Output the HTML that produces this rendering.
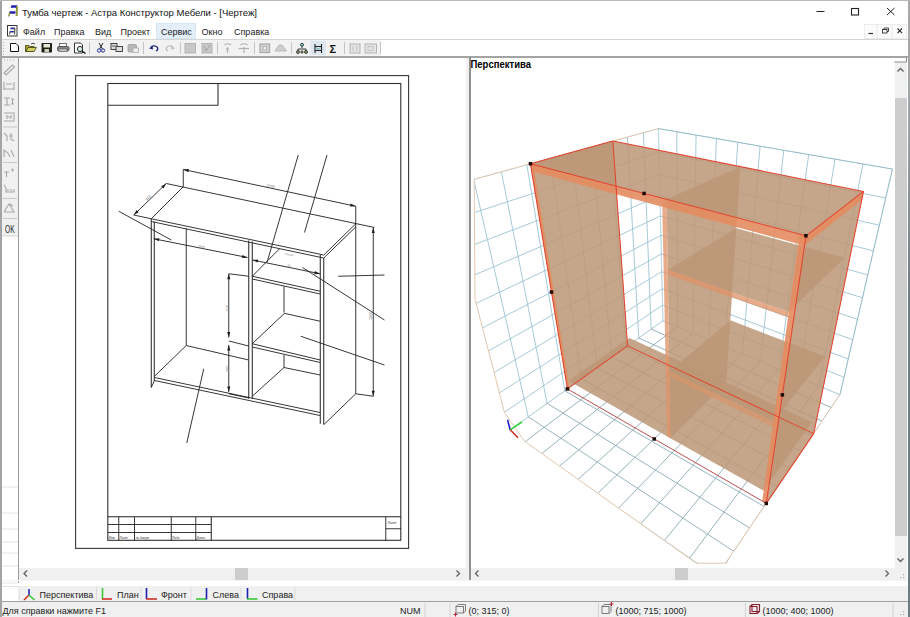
<!DOCTYPE html>
<html><head><meta charset="utf-8">
<style>
*{margin:0;padding:0;box-sizing:border-box}
html,body{width:910px;height:617px;overflow:hidden;background:#fff;font-family:"Liberation Sans",sans-serif;color:#000}
.a{position:absolute;white-space:nowrap}
.t9{font-size:9px;line-height:10px}
</style></head><body>
<div class="a" style="left:0;top:0;width:910px;height:617px;background:#fff"></div>
<!-- window borders -->
<div class="a" style="left:0;top:0;width:2px;height:617px;background:#a4a4a8"></div>
<div class="a" style="left:908px;top:0;width:2px;height:617px;background:linear-gradient(#a8a8a8 0px,#a0a4a6 120px,#6c7c84 300px,#6c7c84 617px)"></div>
<div class="a" style="left:0;top:0;width:910px;height:1px;background:#b8b8b8"></div>
<!-- title -->
<div class="a" style="left:22px;top:7px;font-size:9.5px;line-height:12px;color:#111">Тумба чертеж - Астра Конструктор Мебели - [Чертеж]</div>
<!-- menu -->
<div class="a" style="left:155.5px;top:23px;width:40px;height:16px;background:#e3eef9;border:1px solid #d6e7f6"></div>
<div class="a t9" style="left:23px;top:27px;color:#222">Файл</div>
<div class="a t9" style="left:54px;top:27px;color:#222">Правка</div>
<div class="a t9" style="left:95px;top:27px;color:#222">Вид</div>
<div class="a t9" style="left:120.5px;top:27px;color:#222">Проект</div>
<div class="a t9" style="left:161px;top:27px;color:#222">Сервис</div>
<div class="a t9" style="left:201.5px;top:27px;color:#222">Окно</div>
<div class="a t9" style="left:234px;top:27px;color:#222">Справка</div>
<div class="a" style="left:864px;top:24px;width:43px;height:15px;background:#fbfbfb;border:1px solid #ececec"></div>
<div class="a" style="left:2px;top:39px;width:906px;height:1px;background:#d4d4d4"></div>
<!-- toolbar -->
<div class="a" style="left:2px;top:40px;width:379px;height:16px;background:#f2f2f2"></div>
<div class="a" style="left:2px;top:56px;width:906px;height:1.6px;background:#a4a4a4"></div>
<!-- left column -->
<div class="a" style="left:2px;top:58px;width:16px;height:178px;background:#f0f0f0"></div>
<div class="a" style="left:18px;top:58px;width:1px;height:525px;background:#9c9c9c"></div>
<!-- view gap -->
<div class="a" style="left:466px;top:58px;width:3px;height:523px;background:#f0f0f0"></div>
<div class="a" style="left:469px;top:57px;width:1.5px;height:524px;background:#909090"></div>
<!-- scrollbars -->
<div class="a" style="left:19px;top:567.5px;width:447px;height:12.5px;background:#f0f0f0"></div>
<div class="a" style="left:235px;top:567.5px;width:13px;height:12.5px;background:#cdcdcd"></div>
<div class="a" style="left:470.5px;top:567.5px;width:436px;height:12.5px;background:#f0f0f0"></div>
<div class="a" style="left:674.5px;top:567.5px;width:13.5px;height:12.5px;background:#cdcdcd"></div>
<div class="a" style="left:894.5px;top:62px;width:12px;height:505.5px;background:#f0f0f0"></div>
<div class="a" style="left:894.5px;top:98px;width:12px;height:438px;background:#cdcdcd"></div>
<div class="a" style="left:2px;top:580px;width:906px;height:1px;background:#f4f4f4"></div>
<div class="a" style="left:2px;top:585.5px;width:906px;height:1px;background:#e2e2e2"></div>
<!-- tabs -->
<div class="a" style="left:19px;top:586px;width:889px;height:15px;background:#f0f0f0"></div>
<div class="a" style="left:2px;top:600.5px;width:906px;height:1px;background:#a0a0a0"></div>
<div class="a t9" style="left:39.5px;top:589.5px;color:#222">Перспектива</div>
<div class="a t9" style="left:117px;top:589.5px;color:#222">План</div>
<div class="a t9" style="left:161px;top:589.5px;color:#222">Фронт</div>
<div class="a t9" style="left:212.5px;top:589.5px;color:#222">Слева</div>
<div class="a t9" style="left:262px;top:589.5px;color:#222">Справа</div>
<!-- status -->
<div class="a" style="left:2px;top:601.5px;width:906px;height:15.5px;background:#f0f0f0"></div>
<div class="a t9" style="left:2.5px;top:605.5px;color:#222">Для справки нажмите F1</div>
<div class="a t9" style="left:400px;top:605.5px;color:#222">NUM</div>
<div class="a t9" style="left:468.5px;top:605.5px;color:#222">(0; 315; 0)</div>
<div class="a t9" style="left:615.5px;top:605.5px;color:#222">(1000; 715; 1000)</div>
<div class="a t9" style="left:762.5px;top:605.5px;color:#222">(1000; 400; 1000)</div>
<!-- perspective title -->
<div class="a" style="left:470.5px;top:59px;font-size:9.5px;line-height:11px;font-weight:bold;color:#000;transform:scaleY(1.18);transform-origin:0 100%">Перспектива</div>
<svg class="a" style="left:0;top:0" width="910" height="617" viewBox="0 0 910 617">
<rect x="75.6" y="75.6" width="333" height="472.8" fill="none" stroke="#383838" stroke-width="1.1"/>
<rect x="107.8" y="83.5" width="293" height="456.8" fill="none" stroke="#303030" stroke-width="1.1"/>
<polyline points="108,105.3 218,105.3 218,84" fill="none" stroke="#303030" stroke-width="1.1"/>
<line x1="108" y1="516.75" x2="401" y2="516.75" stroke="#202020" stroke-width="1"/>
<line x1="108" y1="524.5" x2="211.25" y2="524.5" stroke="#202020" stroke-width="0.9"/>
<line x1="108" y1="532.5" x2="211.25" y2="532.5" stroke="#202020" stroke-width="0.9"/>
<line x1="118.75" y1="516.75" x2="118.75" y2="540.5" stroke="#202020" stroke-width="0.9"/>
<line x1="134.5" y1="516.75" x2="134.5" y2="540.5" stroke="#202020" stroke-width="0.9"/>
<line x1="171.25" y1="516.75" x2="171.25" y2="540.5" stroke="#202020" stroke-width="0.9"/>
<line x1="195.75" y1="516.75" x2="195.75" y2="540.5" stroke="#202020" stroke-width="0.9"/>
<line x1="211.25" y1="516.75" x2="211.25" y2="540.5" stroke="#202020" stroke-width="1"/>
<line x1="385.75" y1="516.75" x2="385.75" y2="540.5" stroke="#202020" stroke-width="0.9"/>
<line x1="385.75" y1="528.75" x2="401" y2="528.75" stroke="#202020" stroke-width="0.9"/>
<text x="108.7" y="538.5" font-family="Liberation Sans" font-style="italic" font-size="3.2" fill="#303030">Изм</text>
<text x="119.5" y="538.5" font-family="Liberation Sans" font-style="italic" font-size="3.2" fill="#303030">Лист</text>
<text x="135.5" y="538.5" font-family="Liberation Sans" font-style="italic" font-size="3.2" fill="#303030">№ докум.</text>
<text x="172" y="538.5" font-family="Liberation Sans" font-style="italic" font-size="3.2" fill="#303030">Подп</text>
<text x="196.5" y="538.5" font-family="Liberation Sans" font-style="italic" font-size="3.2" fill="#303030">Дата</text>
<text x="387.5" y="523.6" font-family="Liberation Sans" font-style="italic" font-size="3.4" fill="#303030">Лист</text>
<line x1="166.25" y1="183.5" x2="374.5" y2="227.5" stroke="#202020" stroke-width="0.9"/>
<line x1="183" y1="187" x2="151.25" y2="218.75" stroke="#202020" stroke-width="0.9"/>
<line x1="151.25" y1="218.75" x2="323.75" y2="255" stroke="#202020" stroke-width="0.9"/>
<line x1="151.25" y1="221.5" x2="323.75" y2="258" stroke="#202020" stroke-width="0.9"/>
<line x1="323.75" y1="255" x2="355.75" y2="223.75" stroke="#202020" stroke-width="0.9"/>
<line x1="323.75" y1="258" x2="355.75" y2="227" stroke="#202020" stroke-width="0.9"/>
<line x1="133.75" y1="215" x2="151.25" y2="218.75" stroke="#202020" stroke-width="0.9"/>
<line x1="133.75" y1="215" x2="166.25" y2="183.5" stroke="#202020" stroke-width="0.9"/>
<polygon points="133.8,215.0 136.6,210.1 138.8,212.3" fill="#202020"/>
<polygon points="166.2,183.5 163.4,188.4 161.2,186.2" fill="#202020"/>
<line x1="183.25" y1="169.5" x2="183.25" y2="187" stroke="#202020" stroke-width="0.9"/>
<line x1="183.25" y1="169.5" x2="355.75" y2="206.25" stroke="#202020" stroke-width="0.9"/>
<polygon points="183.2,169.5 189.0,169.1 188.3,172.2" fill="#202020"/>
<polygon points="355.8,206.2 350.0,206.6 350.7,203.6" fill="#202020"/>
<line x1="355.75" y1="206.25" x2="355.75" y2="393.75" stroke="#202020" stroke-width="0.9"/>
<line x1="373.25" y1="227.5" x2="373.25" y2="396.25" stroke="#202020" stroke-width="0.9"/>
<polygon points="373.2,227.5 374.8,233.0 371.7,233.0" fill="#202020"/>
<polygon points="373.2,396.2 371.7,390.8 374.8,390.8" fill="#202020"/>
<line x1="355.75" y1="393.75" x2="373.25" y2="396.25" stroke="#202020" stroke-width="0.9"/>
<line x1="151.25" y1="218.75" x2="151.25" y2="387.5" stroke="#202020" stroke-width="1"/>
<line x1="154.25" y1="221.5" x2="154.25" y2="381" stroke="#202020" stroke-width="1"/>
<line x1="151.25" y1="387.5" x2="154.25" y2="381" stroke="#202020" stroke-width="0.9"/>
<line x1="186.25" y1="228.5" x2="186.25" y2="345.5" stroke="#202020" stroke-width="0.9"/>
<line x1="186.25" y1="345.5" x2="248.75" y2="360" stroke="#202020" stroke-width="0.9"/>
<line x1="186.25" y1="345.5" x2="154.5" y2="376.25" stroke="#202020" stroke-width="0.9"/>
<line x1="154.5" y1="377.5" x2="320" y2="412.5" stroke="#202020" stroke-width="0.9"/>
<line x1="154.5" y1="380.5" x2="320" y2="415.5" stroke="#202020" stroke-width="0.9"/>
<line x1="248.75" y1="240.5" x2="248.75" y2="398.75" stroke="#202020" stroke-width="1"/>
<line x1="252.25" y1="241.5" x2="252.25" y2="398.75" stroke="#202020" stroke-width="1"/>
<line x1="320.25" y1="255" x2="320.25" y2="423.75" stroke="#202020" stroke-width="1"/>
<line x1="323.75" y1="258" x2="323.75" y2="424.5" stroke="#202020" stroke-width="1"/>
<line x1="324" y1="424.5" x2="355.75" y2="393.75" stroke="#202020" stroke-width="0.9"/>
<line x1="252.25" y1="276.25" x2="320.25" y2="291.25" stroke="#202020" stroke-width="0.9"/>
<line x1="252.25" y1="279" x2="320.25" y2="294" stroke="#202020" stroke-width="0.9"/>
<line x1="252.25" y1="276.25" x2="279.5" y2="248.75" stroke="#202020" stroke-width="0.9"/>
<line x1="284" y1="286.25" x2="284" y2="312.5" stroke="#202020" stroke-width="0.9"/>
<line x1="284" y1="313.25" x2="320.25" y2="321.25" stroke="#202020" stroke-width="0.9"/>
<line x1="284" y1="313.75" x2="252.25" y2="343.75" stroke="#202020" stroke-width="0.9"/>
<line x1="252.25" y1="343.75" x2="320.25" y2="360" stroke="#202020" stroke-width="0.9"/>
<line x1="252.25" y1="347" x2="320.25" y2="362.5" stroke="#202020" stroke-width="0.9"/>
<line x1="284" y1="355" x2="284" y2="367.5" stroke="#202020" stroke-width="0.9"/>
<line x1="284" y1="367.5" x2="320.25" y2="375" stroke="#202020" stroke-width="0.9"/>
<line x1="284" y1="367.5" x2="252.25" y2="396.25" stroke="#202020" stroke-width="0.9"/>
<line x1="228.75" y1="273.75" x2="248.75" y2="276.25" stroke="#202020" stroke-width="0.9"/>
<line x1="228.75" y1="341" x2="248.75" y2="346" stroke="#202020" stroke-width="0.9"/>
<line x1="228.75" y1="393.75" x2="248.75" y2="398" stroke="#202020" stroke-width="0.9"/>
<line x1="228.75" y1="273.75" x2="228.75" y2="337.5" stroke="#202020" stroke-width="0.9"/>
<polygon points="228.8,273.8 230.3,279.2 227.2,279.2" fill="#202020"/>
<polygon points="228.8,337.5 227.2,332.0 230.3,332.0" fill="#202020"/>
<line x1="228.75" y1="345" x2="228.75" y2="392" stroke="#202020" stroke-width="0.9"/>
<polygon points="228.8,345.0 230.3,350.5 227.2,350.5" fill="#202020"/>
<polygon points="228.8,392.0 227.2,386.5 230.3,386.5" fill="#202020"/>
<line x1="153.75" y1="238.75" x2="247.5" y2="257.5" stroke="#202020" stroke-width="0.9"/>
<polygon points="153.8,238.8 159.4,238.3 158.8,241.3" fill="#202020"/>
<polygon points="247.5,257.5 241.8,257.9 242.4,254.9" fill="#202020"/>
<line x1="252.5" y1="260" x2="320" y2="273.75" stroke="#202020" stroke-width="0.9"/>
<polygon points="252.5,260.0 258.2,259.6 257.6,262.6" fill="#202020"/>
<polygon points="320.0,273.8 314.3,274.2 314.9,271.1" fill="#202020"/>
<line x1="118.75" y1="211.25" x2="171.25" y2="240" stroke="#202020" stroke-width="0.9"/>
<line x1="298.25" y1="155" x2="267" y2="262.5" stroke="#202020" stroke-width="0.9"/>
<line x1="327" y1="155" x2="304.5" y2="232.5" stroke="#202020" stroke-width="0.9"/>
<line x1="338.25" y1="276.25" x2="384.5" y2="275" stroke="#202020" stroke-width="0.9"/>
<line x1="302.5" y1="267.5" x2="384.5" y2="320" stroke="#202020" stroke-width="0.9"/>
<line x1="300.75" y1="336.25" x2="384.5" y2="365" stroke="#202020" stroke-width="0.9"/>
<line x1="203.75" y1="368.75" x2="186.75" y2="443" stroke="#202020" stroke-width="0.9"/>
<text x="266" y="186.5" font-family="Liberation Sans" font-size="3.8" fill="#858585" transform="rotate(12 266 186.5)">1000</text>
<text x="198" y="247.5" font-family="Liberation Sans" font-size="3.8" fill="#858585" transform="rotate(12 198 247.5)">500</text>
<text x="285" y="255" font-family="Liberation Sans" font-size="3.0" fill="#858585" transform="rotate(9 285 255)">Полка</text>
<text x="287" y="266.5" font-family="Liberation Sans" font-size="3.4" fill="#858585" transform="rotate(12 287 266.5)">2b</text>
<text x="147" y="201" font-family="Liberation Sans" font-size="3.8" fill="#858585" transform="rotate(-45 147 201)">400</text>
<text x="228.5" y="311.5" font-family="Liberation Sans" font-size="3.8" fill="#858585" transform="rotate(-90 228.5 311.5)">100</text>
<text x="228.5" y="372" font-family="Liberation Sans" font-size="3.8" fill="#858585" transform="rotate(-90 228.5 372)">300</text>
<text x="372" y="320" font-family="Liberation Sans" font-size="3.8" fill="#858585" transform="rotate(-90 372 320)">1000</text>
<defs>
<clipPath id="cf"><polygon points="662.9,320.7 840.0,394.7 733.8,551.3 732.7,552.0 726.4,563.2 696.3,563.2 690.0,558.8 524.5,441.2 528.6,416.6"/></clipPath>
<clipPath id="cl"><polygon points="658.4,128.5 662.9,320.7 528.6,416.6 524.5,441.2 504.5,412.5 475.0,299.0 474.2,179.2"/></clipPath>
<clipPath id="cb"><polygon points="658.4,128.5 892.5,169.0 840.0,394.7 662.9,320.7"/></clipPath>
<clipPath id="cview"><rect x="470" y="58" width="424" height="509"/></clipPath>
</defs>
<g clip-path="url(#cview)">
<g clip-path="url(#cf)" stroke="#8aaab4" stroke-width="0.9"><line x1="489.7" y1="444.4" x2="662.9" y2="320.7"/><line x1="505.8" y1="456.3" x2="677.6" y2="326.8"/><line x1="522.7" y1="468.8" x2="692.9" y2="333.2"/><line x1="540.6" y1="482.1" x2="708.8" y2="339.9"/><line x1="559.5" y1="496.1" x2="725.3" y2="346.8"/><line x1="579.5" y1="510.9" x2="742.5" y2="353.9"/><line x1="600.7" y1="526.6" x2="760.4" y2="361.4"/><line x1="623.3" y1="543.3" x2="779.0" y2="369.2"/><line x1="647.4" y1="561.1" x2="798.5" y2="377.4"/><line x1="673.0" y1="580.1" x2="818.8" y2="385.8"/><line x1="700.4" y1="600.5" x2="840.0" y2="394.7"/><line x1="471.1" y1="435.4" x2="727.0" y2="626.9"/><line x1="492.8" y1="420.6" x2="745.2" y2="596.9"/><line x1="513.0" y1="406.9" x2="761.8" y2="569.6"/><line x1="532.0" y1="394.0" x2="776.9" y2="544.7"/><line x1="549.7" y1="382.0" x2="790.7" y2="521.9"/><line x1="566.4" y1="370.6" x2="803.4" y2="501.0"/><line x1="582.2" y1="360.0" x2="815.2" y2="481.6"/><line x1="597.0" y1="349.9" x2="826.0" y2="463.8"/><line x1="611.0" y1="340.4" x2="836.0" y2="447.2"/><line x1="624.3" y1="331.4" x2="845.4" y2="431.8"/><line x1="636.8" y1="322.9" x2="854.1" y2="417.5"/><line x1="648.7" y1="314.8" x2="862.3" y2="404.0"/></g>
<g clip-path="url(#cl)" stroke="#9cc4d2" stroke-width="0.9"><line x1="493.7" y1="470.9" x2="396.3" y2="153.6"/><line x1="514.4" y1="455.1" x2="432.0" y2="146.1"/><line x1="533.7" y1="440.4" x2="464.4" y2="139.3"/><line x1="551.7" y1="426.7" x2="493.8" y2="133.2"/><line x1="568.7" y1="413.7" x2="520.6" y2="127.6"/><line x1="584.7" y1="401.6" x2="545.1" y2="122.5"/><line x1="599.7" y1="390.1" x2="567.6" y2="117.8"/><line x1="613.9" y1="379.3" x2="588.5" y2="113.4"/><line x1="627.3" y1="369.1" x2="607.7" y2="109.4"/><line x1="640.0" y1="359.4" x2="625.6" y2="105.7"/><line x1="652.0" y1="350.3" x2="642.2" y2="102.2"/><line x1="663.4" y1="341.6" x2="657.7" y2="98.9"/><line x1="414.9" y1="195.6" x2="660.6" y2="127.9"/><line x1="424.9" y1="228.9" x2="661.1" y2="151.3"/><line x1="434.2" y1="259.8" x2="661.5" y2="173.5"/><line x1="442.8" y1="288.5" x2="662.0" y2="194.8"/><line x1="450.9" y1="315.3" x2="662.4" y2="215.0"/><line x1="458.4" y1="340.3" x2="662.8" y2="234.4"/><line x1="465.5" y1="363.8" x2="663.2" y2="252.9"/><line x1="472.1" y1="385.8" x2="663.6" y2="270.6"/><line x1="478.3" y1="406.5" x2="664.0" y2="287.6"/><line x1="484.2" y1="426.0" x2="664.3" y2="303.9"/><line x1="489.7" y1="444.4" x2="664.6" y2="319.5"/></g>
<g clip-path="url(#cb)" stroke="#9cc4d2" stroke-width="0.9"><line x1="663.4" y1="341.6" x2="657.7" y2="98.9"/><line x1="677.7" y1="347.9" x2="676.7" y2="101.5"/><line x1="692.6" y1="354.5" x2="696.6" y2="104.2"/><line x1="708.0" y1="361.4" x2="717.6" y2="107.0"/><line x1="724.0" y1="368.5" x2="739.7" y2="110.0"/><line x1="740.6" y1="375.9" x2="762.9" y2="113.2"/><line x1="757.9" y1="383.5" x2="787.5" y2="116.5"/><line x1="775.9" y1="391.6" x2="813.5" y2="120.0"/><line x1="794.7" y1="399.9" x2="841.0" y2="123.7"/><line x1="814.3" y1="408.6" x2="870.2" y2="127.6"/><line x1="834.7" y1="417.7" x2="901.2" y2="131.8"/><line x1="640.8" y1="125.4" x2="923.9" y2="174.4"/><line x1="641.8" y1="148.5" x2="916.0" y2="204.2"/><line x1="642.7" y1="170.4" x2="908.5" y2="232.0"/><line x1="643.6" y1="191.4" x2="901.5" y2="258.2"/><line x1="644.4" y1="211.4" x2="894.9" y2="282.7"/><line x1="645.2" y1="230.5" x2="888.6" y2="305.9"/><line x1="646.0" y1="248.8" x2="882.8" y2="327.7"/><line x1="646.7" y1="266.4" x2="877.2" y2="348.4"/><line x1="647.4" y1="283.2" x2="872.0" y2="367.9"/><line x1="648.1" y1="299.3" x2="867.0" y2="386.4"/><line x1="648.7" y1="314.8" x2="862.3" y2="404.0"/></g>
<polyline points="658.4,128.5 474.2,179.2 475.0,299.0 504.5,412.5 524.5,441.2 690.0,558.8 696.3,563.2 726.4,563.2 732.7,552.0 733.8,551.3 840.0,394.7" fill="none" stroke="#e2c8b0" stroke-width="1"/>
<polyline points="658.4,128.5 892.5,169.0 840.0,394.7" fill="none" stroke="#98bcc8" stroke-width="1"/>
<g><polygon points="567.4,388.9 530.4,163.7 612.8,141.0 627.6,345.9" fill="rgba(188,150,118,0.85)"/><polygon points="766.3,503.4 806.0,235.8 863.5,191.4 813.7,433.6" fill="rgba(188,150,118,0.85)"/><polygon points="530.4,163.7 806.0,235.8 863.5,191.4 612.8,141.0" fill="rgba(188,150,118,0.85)"/><polygon points="568.3,380.7 763.7,490.7 811.9,421.9 629.4,337.9" fill="rgba(188,150,118,0.85)"/><polygon points="670.5,438.2 666.6,199.3 740.4,166.7 726.3,382.5" fill="rgba(188,150,118,0.85)"/><polygon points="667.8,269.7 788.8,312.1 844.7,257.8 736.4,228.2" fill="rgba(188,150,118,0.85)"/><polygon points="669.4,371.6 773.4,421.4 825.0,356.6 730.4,320.3" fill="rgba(188,150,118,0.85)"/><polygon points="567.4,388.9 569.9,390.3 533.5,164.5 530.4,163.7" fill="rgba(228,140,95,0.88)"/><polygon points="762.2,501.1 766.3,503.4 806.0,235.8 799.8,234.1" fill="rgba(228,140,95,0.9)"/><polygon points="531.7,171.2 804.5,245.5 806.0,235.8 530.4,163.7" fill="rgba(228,140,95,0.9)"/><polygon points="804.5,245.5 806.0,235.8 863.5,191.4 861.8,199.7" fill="rgba(228,140,95,0.9)"/><polygon points="667.2,436.3 670.5,438.2 666.6,199.3 662.1,198.2" fill="rgba(224,148,104,0.78)"/><polygon points="667.8,274.4 788.1,317.3 788.8,312.1 667.8,269.7" fill="rgba(224,148,104,0.78)"/><polygon points="669.5,376.6 772.7,426.7 773.4,421.4 669.4,371.6" fill="rgba(214,150,108,0.8)"/></g>
<g stroke="#e2442e" stroke-width="1.05"><line x1="530.4" y1="163.7" x2="806.0" y2="235.8"/><line x1="530.4" y1="163.7" x2="612.8" y2="141.0"/><line x1="612.8" y1="141.0" x2="863.5" y2="191.4"/><line x1="806.0" y1="235.8" x2="863.5" y2="191.4"/><line x1="530.4" y1="163.7" x2="567.4" y2="388.9"/><line x1="806.0" y1="235.8" x2="766.3" y2="503.4"/><line x1="766.3" y1="503.4" x2="813.7" y2="433.6"/><line x1="567.4" y1="388.9" x2="627.6" y2="345.9"/><line x1="627.6" y1="345.9" x2="813.7" y2="433.6"/><line x1="612.8" y1="141.0" x2="627.6" y2="345.9"/><line x1="863.5" y1="191.4" x2="813.7" y2="433.6"/></g>
<g stroke="#b84444" stroke-width="0.95"><line x1="567.4" y1="388.9" x2="766.3" y2="503.4"/></g>
<rect x="528.7" y="162.0" width="3.5" height="3.5" fill="#1e0c0a"/><rect x="642.3" y="191.7" width="3.5" height="3.5" fill="#1e0c0a"/><rect x="804.2" y="234.0" width="3.5" height="3.5" fill="#1e0c0a"/><rect x="549.7" y="290.3" width="3.5" height="3.5" fill="#1e0c0a"/><rect x="780.6" y="393.1" width="3.5" height="3.5" fill="#1e0c0a"/><rect x="565.6" y="387.2" width="3.5" height="3.5" fill="#1e0c0a"/><rect x="652.5" y="437.2" width="3.5" height="3.5" fill="#1e0c0a"/><rect x="764.5" y="501.7" width="3.5" height="3.5" fill="#1e0c0a"/>
<line x1="510.1" y1="429.8" x2="507.6" y2="419.8" stroke="#2020d0" stroke-width="1.6"/>
<line x1="510.1" y1="429.8" x2="522.1" y2="421.8" stroke="#30d030" stroke-width="1.6"/>
<line x1="510.1" y1="429.8" x2="518.1" y2="437.8" stroke="#d03020" stroke-width="1.6"/>
</g>
<path d="M11.5,5.2 H17.5 L16.8,7.8 H10.5 Z" fill="#2020b8"/>
<path d="M9.6,11.2 H15.6 L15.2,13.8 H8.8 Z" fill="#2020b8"/>
<path d="M16,6 L18,6.5 L17.6,16 L15.6,16 Z" fill="#8c9638"/>
<path d="M9.2,12.5 L10.6,12.5 L9.4,16.5 L7.8,16.5 Z" fill="#8c9638"/>
<rect x="7.5" y="25.5" width="9.5" height="10.5" fill="#fff" stroke="#3a3a3a" stroke-width="1"/>
<path d="M10.8,27.6 H15 L14.6,29.2 H10.2 Z" fill="#3030a0"/>
<path d="M9.8,31 H14 L13.7,32.6 H9.3 Z" fill="#3030a0"/>
<path d="M14.2,28 L15.4,28.2 L15.1,34.5 L13.9,34.5 Z" fill="#505a40"/>
<path d="M9.6,32 L10.6,32 L10,34.5 L9,34.5 Z" fill="#505a40"/>
<line x1="816.5" y1="11.5" x2="824.5" y2="11.5" stroke="#222" stroke-width="1"/>
<rect x="851.5" y="8.5" width="7" height="6.5" fill="none" stroke="#222" stroke-width="1.1"/>
<path d="M887,8 L894.5,15 M894.5,8 L887,15" stroke="#222" stroke-width="1"/>
<line x1="877" y1="25" x2="877" y2="38.5" stroke="#e8e8e8"/><line x1="892" y1="25" x2="892" y2="38.5" stroke="#e8e8e8"/>
<line x1="868.5" y1="33.5" x2="873" y2="33.5" stroke="#333" stroke-width="1.2"/>
<g fill="none" stroke="#333" stroke-width="0.9"><rect x="882.5" y="29.5" width="4.5" height="3.5"/><path d="M884,29.5 V28 H888.5 V31.5 H887"/></g>
<path d="M897.5,28.5 L902,33 M902,28.5 L897.5,33" stroke="#333" stroke-width="1.1"/>
<rect x="3" y="42" width="1" height="1" fill="#b0b0b0"/>
<rect x="3" y="45" width="1" height="1" fill="#b0b0b0"/>
<rect x="3" y="48" width="1" height="1" fill="#b0b0b0"/>
<rect x="3" y="51" width="1" height="1" fill="#b0b0b0"/>
<rect x="3" y="54" width="1" height="1" fill="#b0b0b0"/>
<line x1="89.5" y1="42" x2="89.5" y2="54" stroke="#c4c4c4" stroke-width="1"/>
<line x1="143.5" y1="42" x2="143.5" y2="54" stroke="#c4c4c4" stroke-width="1"/>
<line x1="180.5" y1="42" x2="180.5" y2="54" stroke="#c4c4c4" stroke-width="1"/>
<line x1="217.5" y1="42" x2="217.5" y2="54" stroke="#c4c4c4" stroke-width="1"/>
<line x1="254.5" y1="42" x2="254.5" y2="54" stroke="#c4c4c4" stroke-width="1"/>
<line x1="291.5" y1="42" x2="291.5" y2="54" stroke="#c4c4c4" stroke-width="1"/>
<line x1="344.5" y1="42" x2="344.5" y2="54" stroke="#c4c4c4" stroke-width="1"/>
<line x1="380.5" y1="42" x2="380.5" y2="54" stroke="#c4c4c4" stroke-width="1"/>
<path d="M10.5,43.5 H16 L18.5,46 V51.5 H10.5 Z" fill="#fff" stroke="#111" stroke-width="1"/>
<path d="M25.5,45.5 H29 L30,46.5 H34 V51.5 H25.5 Z" fill="#a8a030" stroke="#404010" stroke-width="0.8"/><path d="M26,51.5 L28,47.5 H36.5 L34,51.5 Z" fill="#d8d060" stroke="#404010" stroke-width="0.8"/><path d="M31,44 Q33,42.5 35,44" fill="none" stroke="#333" stroke-width="0.9"/>
<rect x="42" y="43.5" width="9.5" height="8.5" fill="#202010" stroke="#111" stroke-width="0.8"/><rect x="43.5" y="44" width="6.5" height="3.5" fill="#e8e8d8"/><rect x="44.5" y="49" width="4.5" height="3" fill="#d0d0c0"/>
<rect x="59.5" y="43.5" width="7" height="3" fill="#fff" stroke="#555" stroke-width="0.8"/><rect x="57.5" y="46.5" width="11.5" height="4.5" rx="1.5" fill="#888" stroke="#444" stroke-width="0.8"/><rect x="59" y="49" width="8" height="2.5" fill="#ccc" stroke="#555" stroke-width="0.6"/>
<path d="M74.5,43 H80.5 L82.5,45 V53 H74.5 Z" fill="#fff" stroke="#222" stroke-width="0.9"/><circle cx="80" cy="49" r="2.6" fill="#d8f0f0" stroke="#222" stroke-width="1"/><line x1="82" y1="51" x2="85.5" y2="53.5" stroke="#111" stroke-width="1.3"/>
<path d="M99,43 L102.5,49 M103,43 L99.5,49" stroke="#111" stroke-width="0.9"/><circle cx="99" cy="50.5" r="1.7" fill="none" stroke="#2838a0" stroke-width="1"/><circle cx="103" cy="50.5" r="1.7" fill="none" stroke="#2838a0" stroke-width="1"/>
<rect x="111" y="43.5" width="6" height="6" fill="#ddd" stroke="#333" stroke-width="0.9"/><rect x="116" y="46.5" width="6.5" height="5" fill="#ddd" stroke="#333" stroke-width="0.9"/><line x1="112" y1="46" x2="115.5" y2="46" stroke="#333" stroke-width="0.8"/>
<rect x="128" y="44.5" width="8.5" height="7.5" rx="1" fill="#b8b8b8" stroke="#a0a0a0" stroke-width="0.8"/><rect x="133" y="48" width="5.5" height="4.5" fill="#eee" stroke="#a8a8a8" stroke-width="0.8"/>
<path d="M151,47 Q155,44.5 157.5,47.5 Q158.5,50 156,51" fill="none" stroke="#1a2a80" stroke-width="1.3"/><path d="M149,48.5 L152.5,45.5 L153,49.5 Z" fill="#1a2a80"/>
<path d="M173,47 Q169,44.5 166.5,47.5 Q165.5,50 168,51" fill="none" stroke="#c0c0c0" stroke-width="1.3"/><path d="M175,48.5 L171.5,45.5 L171,49.5 Z" fill="#c0c0c0"/>
<rect x="185" y="43.5" width="10.5" height="9.5" fill="#c8c8c8" stroke="#b0b0b0" stroke-width="0.9"/>
<rect x="202" y="43.5" width="10" height="9.5" fill="#c8c8c8" stroke="#b0b0b0" stroke-width="0.9"/><path d="M204,46 L206,51 L210,45" fill="none" stroke="#a0a0a0"/>
<g stroke="#b0b0b0" fill="none" stroke-width="1.2"><path d="M224.5,45 Q228,42.5 231,45"/><line x1="227.5" y1="47" x2="227.5" y2="53"/><line x1="226" y1="49" x2="229" y2="49"/></g>
<g stroke="#b0b0b0" fill="none" stroke-width="1.2"><path d="M240.5,45 Q244,42.5 247.5,45"/><line x1="238.5" y1="48.5" x2="249" y2="48.5"/><line x1="244" y1="47" x2="244" y2="53"/></g>
<rect x="260" y="44" width="9.5" height="8.5" fill="#d4d4d4" stroke="#a8a8a8" stroke-width="1.2"/><rect x="263" y="46.5" width="3.5" height="3.5" fill="#f4f4f4" stroke="#a8a8a8" stroke-width="0.8"/>
<path d="M275,51 L279,45 H282 L286.5,51 Z" fill="#d0d0d0" stroke="#b0b0b0" stroke-width="0.8"/>
<g stroke="#222" stroke-width="0.9" fill="none"><path d="M302,46 V48 M298,51 V49 H306 V51"/></g><circle cx="302" cy="44.8" r="1.5" fill="#7ad0d0" stroke="#222" stroke-width="0.8"/><circle cx="298" cy="52" r="1.5" fill="#90a870" stroke="#222" stroke-width="0.8"/><circle cx="306" cy="52" r="1.5" fill="#90a870" stroke="#222" stroke-width="0.8"/><circle cx="302" cy="52" r="1.2" fill="#90a870" stroke="#222" stroke-width="0.7"/>
<rect x="310.5" y="41" width="15.5" height="14" fill="#dde6ee"/>
<g stroke="#222" stroke-width="1.1" fill="none"><path d="M315,44 V53 M321.5,44 V53 M315,46.5 H321.5 M315,50.5 H321.5"/></g><path d="M316.5,47.5 L318,49.5 L320,47.5" stroke="#40a0a0" fill="none" stroke-width="0.9"/>
<text x="329.5" y="52.5" font-family="Liberation Sans" font-weight="bold" font-size="11" fill="#111">Σ</text>
<rect x="350" y="44" width="10" height="9" fill="#e4e4e4" stroke="#b4b4b4" stroke-width="1"/><path d="M353,46 V51 M357,46 V51" stroke="#c0c0c0"/>
<rect x="365" y="44" width="11.5" height="9" fill="#e4e4e4" stroke="#b4b4b4" stroke-width="1"/><rect x="368" y="46.5" width="5" height="4" fill="none" stroke="#c4c4c4"/>
<rect x="4" y="59.5" width="1" height="1" fill="#b8b8b8"/>
<rect x="7" y="59.5" width="1" height="1" fill="#b8b8b8"/>
<rect x="10" y="59.5" width="1" height="1" fill="#b8b8b8"/>
<rect x="13" y="59.5" width="1" height="1" fill="#b8b8b8"/>
<g stroke="#a8a8a8" fill="none" stroke-width="1.1">
<path d="M4,73 L12.5,65 L14.5,67 L6,75 Z"/>
<path d="M4,82 V90 M14,82 V90 M4,89 H14 M6,84 H12"/>
<path d="M4,98 H10 M4,105 H10 M7,98 V105 M11,99 H14 M11,104 H14 M12.5,99 V104"/>
<path d="M4,113 H14 V121 H4 M7,115 V119 M11,115 V119 M7,117 H11"/>
<path d="M4,133 L7,136 V141 M9,136 H13 M11,133 V139 L14,141"/>
<path d="M4,157 V150 L8,153 L10,157 M11,150 L14,157"/>
<path d="M4,172 H9 M6.5,172 V177 M11,170 H14 M12.5,168.5 V171.5"/>
<path d="M4,185 L6,188 M6,188 V192 H14 V189 M8,189 V191 M11,189 V191"/>
<path d="M4,212 L9,204 L11,207 M11,207 L14,212 H4 M10,204 L13,206"/>
</g>
<line x1="3" y1="127" x2="17" y2="127" stroke="#c8c8c8" stroke-width="1"/>
<line x1="3" y1="162.5" x2="17" y2="162.5" stroke="#c8c8c8" stroke-width="1"/>
<line x1="3" y1="198.5" x2="17" y2="198.5" stroke="#c8c8c8" stroke-width="1"/>
<line x1="3" y1="218.5" x2="17" y2="218.5" stroke="#c8c8c8" stroke-width="1"/>
<text x="0" y="0" font-family="Liberation Sans" font-size="9" fill="#222" transform="translate(5,232.5) scale(0.74,1.12)">OK</text>
<line x1="2" y1="236" x2="18" y2="236" stroke="#d8d8d8"/>
<line x1="2" y1="487" x2="18" y2="487" stroke="#e4e4e4" stroke-width="1"/>
<line x1="2" y1="513" x2="18" y2="513" stroke="#e4e4e4" stroke-width="1"/>
<line x1="2" y1="529" x2="18" y2="529" stroke="#e4e4e4" stroke-width="1"/>
<line x1="2" y1="542" x2="18" y2="542" stroke="#e4e4e4" stroke-width="1"/>
<line x1="2" y1="553" x2="18" y2="553" stroke="#e4e4e4" stroke-width="1"/>
<line x1="2" y1="566" x2="18" y2="566" stroke="#e4e4e4" stroke-width="1"/>
<line x1="2" y1="583" x2="18" y2="583" stroke="#e4e4e4" stroke-width="1"/>
<path d="M27.0,570.5 L24.0,573.5 L27.0,576.5" fill="none" stroke="#606060" stroke-width="1.3"/>
<path d="M456.5,570.5 L459.5,573.5 L456.5,576.5" fill="none" stroke="#606060" stroke-width="1.3"/>
<path d="M478.5,570.5 L475.5,573.5 L478.5,576.5" fill="none" stroke="#606060" stroke-width="1.3"/>
<path d="M885.5,570.5 L888.5,573.5 L885.5,576.5" fill="none" stroke="#606060" stroke-width="1.3"/>
<path d="M897.5,71.5 L900.5,68.5 L903.5,71.5" fill="none" stroke="#606060" stroke-width="1.3"/>
<path d="M897.5,558.5 L900.5,561.5 L903.5,558.5" fill="none" stroke="#606060" stroke-width="1.3"/>
<rect x="903" y="577" width="1.2" height="1.2" fill="#b0b0b0"/>
<rect x="900" y="577" width="1.2" height="1.2" fill="#b0b0b0"/>
<rect x="903" y="574" width="1.2" height="1.2" fill="#b0b0b0"/>
<rect x="903" y="614" width="1.2" height="1.2" fill="#b0b0b0"/>
<rect x="900" y="614" width="1.2" height="1.2" fill="#b0b0b0"/>
<rect x="903" y="611" width="1.2" height="1.2" fill="#b0b0b0"/>
<path d="M894.5,62 H906.5 V57.5" fill="none" stroke="#8c8c8c" stroke-width="1"/>
<line x1="19" y1="587" x2="19" y2="600" stroke="#dcdcdc"/>
<line x1="96.5" y1="587" x2="96.5" y2="600" stroke="#dcdcdc"/>
<line x1="141" y1="587" x2="141" y2="600" stroke="#dcdcdc"/>
<line x1="191" y1="587" x2="191" y2="600" stroke="#dcdcdc"/>
<line x1="241" y1="587" x2="241" y2="600" stroke="#dcdcdc"/>
<line x1="295" y1="587" x2="295" y2="600" stroke="#dcdcdc"/>
<g stroke-width="1.6" fill="none"><line x1="29" y1="589" x2="29" y2="595" stroke="#2828c0"/><line x1="29" y1="595" x2="24" y2="600" stroke="#d03028"/><line x1="29" y1="595" x2="34.5" y2="600" stroke="#38c838"/></g>
<g stroke-width="1.6" fill="none"><line x1="102.5" y1="588" x2="102.5" y2="599" stroke="#38c838"/><line x1="102" y1="599" x2="112" y2="599" stroke="#d03028"/></g>
<g stroke-width="1.6" fill="none"><line x1="146.5" y1="588" x2="146.5" y2="599" stroke="#2020b0"/><line x1="146" y1="599" x2="157" y2="599" stroke="#d03028"/></g>
<g stroke-width="1.6" fill="none"><line x1="196" y1="599" x2="206" y2="599" stroke="#38c838"/><line x1="206.5" y1="588" x2="206.5" y2="599.5" stroke="#2020b0"/></g>
<g stroke-width="1.6" fill="none"><line x1="247.5" y1="588" x2="247.5" y2="599" stroke="#2020b0"/><line x1="247" y1="599" x2="257.5" y2="599" stroke="#38c838"/></g>
<line x1="425" y1="603" x2="425" y2="617" stroke="#d4d4d4"/>
<line x1="450" y1="603" x2="450" y2="617" stroke="#d4d4d4"/>
<line x1="598.5" y1="603" x2="598.5" y2="617" stroke="#d4d4d4"/>
<line x1="745.5" y1="603" x2="745.5" y2="617" stroke="#d4d4d4"/>
<line x1="893" y1="603" x2="893" y2="617" stroke="#d4d4d4"/>
<g fill="none" stroke="#707070" stroke-width="0.9"><rect x="456" y="606.5" width="7.5" height="6.5"/><path d="M456,606.5 L458,604.5 H465.5 V611 L463.5,613"/></g><path d="M453.5,614.5 H457.5 M455.5,612.5 V616.5" stroke="#c02040" stroke-width="1"/>
<g fill="none" stroke="#707070" stroke-width="0.9"><rect x="602" y="606.5" width="7" height="7"/><path d="M602,606.5 L604,604.5 H611 V611.5 L609,613.5"/></g><path d="M609.5,604 H613.5 M611.5,602 V606" stroke="#c02040" stroke-width="1"/>
<g fill="none" stroke="#8a2030" stroke-width="1.1"><rect x="750" y="606.5" width="7" height="7"/><path d="M750,606.5 L752,604.5 H759.5 V611.5 L757,613.5 M752,604.5 V611.5 H759.5"/></g>
</svg>
</body></html>
